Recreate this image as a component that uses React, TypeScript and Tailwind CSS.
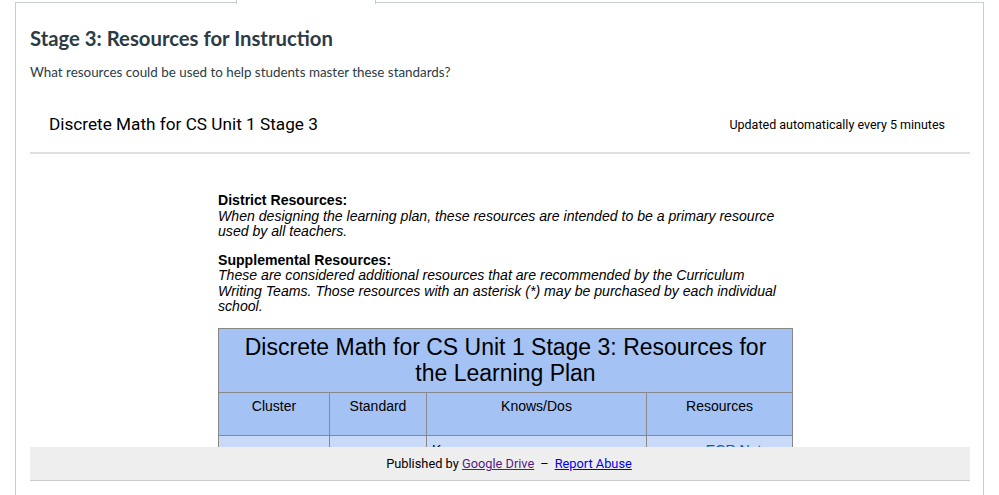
import React from "react";

const lato = { fontFamily: "Lato, 'Open Sans', sans-serif" };

function PublishedDoc() {
  return (
    <div className="flex h-[386px] flex-col overflow-hidden">
      {/* published doc header */}
      <div className="flex h-[59px] shrink-0 items-center justify-between border-b-2 border-[#e0e0e0] pl-[19px] pr-[25px] pt-[3px] font-['Roboto',sans-serif] text-black">
        <span className="text-[17.2px]">Discrete Math for CS Unit 1 Stage 3</span>
        <span className="text-[12.5px]">Updated automatically every 5 minutes</span>
      </div>

      {/* doc body */}
      <div className="min-h-0 flex-1 overflow-hidden pl-[188px] pt-[39px] font-['Liberation_Sans',Arial,sans-serif] text-[14.1px] leading-[15.5px] text-black">
        <p className="font-bold">District Resources:</p>
        <p className="italic">
          When designing the learning plan, these resources are intended to be a primary resource
          <br />
          used by all teachers.
        </p>
        <p className="mt-[13px] font-bold">Supplemental Resources:</p>
        <p className="italic">
          These are considered additional resources that are recommended by the Curriculum
          <br />
          Writing Teams. Those resources with an asterisk (*) may be purchased by each individual
          <br />
          school.
        </p>

        <table className="mt-[13px] w-[574px] table-fixed border-collapse">
          <colgroup>
            <col className="w-[111px]" />
            <col className="w-[97px]" />
            <col className="w-[220px]" />
            <col className="w-[146px]" />
          </colgroup>
          <thead>
            <tr>
              <th
                colSpan={4}
                className="h-[64px] border border-[#888] bg-[#a4c2f4] text-[23px] font-normal leading-[26px]"
              >
                Discrete Math for CS Unit 1 Stage 3: Resources for
                <br />
                the Learning Plan
              </th>
            </tr>
            <tr className="bg-[#a4c2f4] text-[14px]">
              <th className="h-[43px] border border-[#888] pt-[6px] align-top font-normal">Cluster</th>
              <th className="border border-[#888] pt-[6px] align-top font-normal">Standard</th>
              <th className="border border-[#888] pt-[6px] align-top font-normal">Knows/Dos</th>
              <th className="border border-[#888] pt-[6px] align-top font-normal">Resources</th>
            </tr>
          </thead>
          <tbody>
            <tr className="bg-[#c9daf8]">
              <td className="h-[120px] border border-[#888] align-top"></td>
              <td className="border border-[#888] align-top"></td>
              <td className="border border-[#888] px-[5px] pt-[7px] align-top">Know:</td>
              <td className="border border-[#888] pl-[50px] pt-[7px] align-top">
                <span className="text-[#1155cc] underline">• ECR Notes</span>
              </td>
            </tr>
          </tbody>
        </table>
      </div>

      {/* footer */}
      <div className="flex h-[34px] shrink-0 items-center justify-center border-b border-[#ccc] bg-[#eeeeee] pl-[18px] font-['Roboto',sans-serif] text-[12.8px] text-black">
        <span>
          Published by{" "}
          <a href="#" className="text-[#551a8b] underline">
            Google Drive
          </a>
          <span className="mx-[6px]">–</span>
          <a href="#" className="text-[#0000ee] underline">
            Report Abuse
          </a>
        </span>
      </div>
    </div>
  );
}

export default function App() {
  return (
    <div className="h-[495px] w-[999px] overflow-hidden bg-white pt-[2px]">
      <div className="relative ml-[15px] h-[600px] w-[969px] border border-[#c7cdd1] pl-[14px] pr-[13px] pt-[23px]">
        {/* active tab opening */}
        <div className="absolute -top-[3px] left-[220px] h-[4px] w-[140px] border-x border-[#c7cdd1] bg-white" />

        <h2 style={lato} className="text-[20.3px] font-bold leading-[25px] text-[#2d3b45]">
          Stage 3: Resources for Instruction
        </h2>
        <p style={lato} className="mt-[11px] text-[13.4px] leading-[20px] text-[#2d3b45]">
          What resources could be used to help students master these standards?
        </p>

        <div className="mt-[13px]">
          <PublishedDoc />
        </div>
      </div>
    </div>
  );
}
